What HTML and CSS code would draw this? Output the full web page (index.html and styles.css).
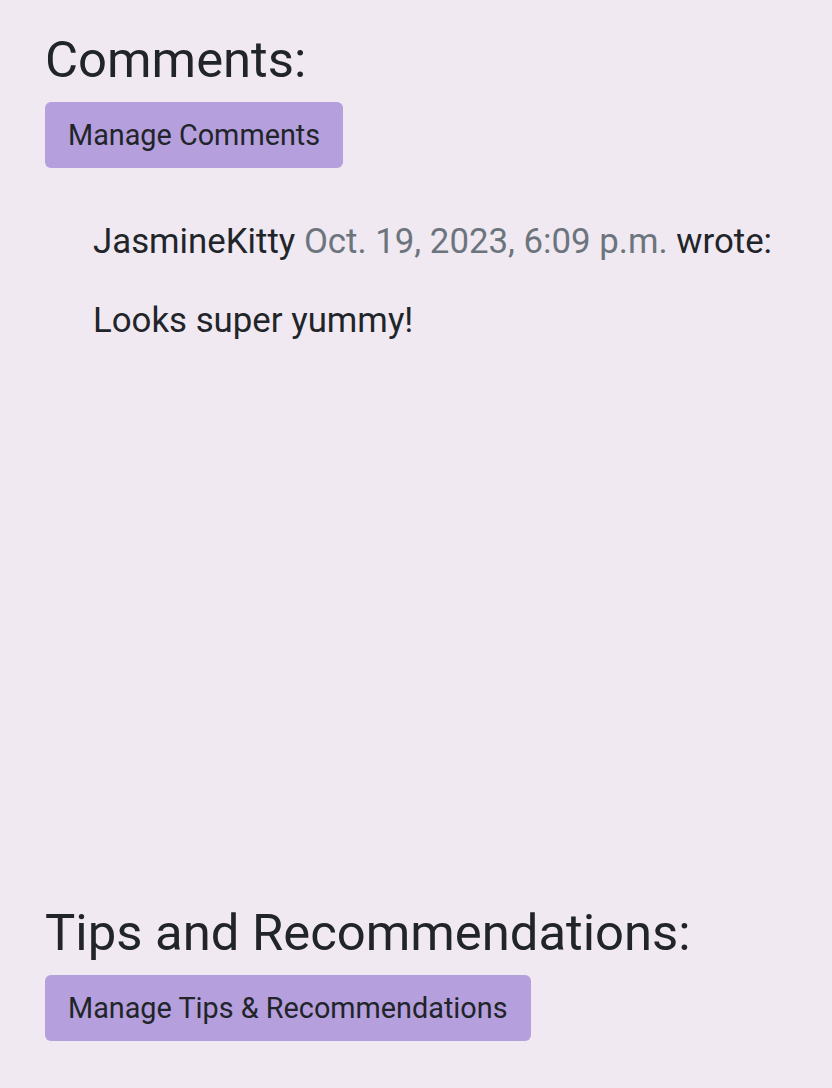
FILE: index.html
```html
<!DOCTYPE html>
<html>
<head>
<meta charset="utf-8">
<link rel="stylesheet" href="styles.css">
</head>
<body>
<main class="page">
  <section class="section comments">
    <h2 class="title">Comments:</h2>
    <a class="btn" href="#">Manage Comments</a>
    <ul class="comment-list">
      <li class="comment">
        <p class="meta">JasmineKitty <span class="muted">Oct. 19, 2023, 6:09 p.m.</span> wrote:</p>
        <p class="body">Looks super yummy!</p>
      </li>
    </ul>
  </section>
  <section class="section tips">
    <h2 class="title">Tips and Recommendations:</h2>
    <a class="btn" href="#">Manage Tips &amp; Recommendations</a>
  </section>
</main>
</body>
</html>
```

FILE: styles.css
```css
html, body {
  margin: 0;
  padding: 0;
  background: #f0e9f1;
}
body {
  font-family: Roboto, "Noto Sans", sans-serif;
  color: #212529;
  font-size: 34.8px;
  line-height: 51px;
}
.page {
  padding: 29px 45px 0 45px;
}
.section {
  display: flex;
  flex-direction: column;
  align-items: flex-start;
}
.comments {
  min-height: 873px;
}
.title {
  margin: 0 0 12px 0;
  font-weight: 400;
  font-size: 50.8px;
  line-height: 61px;
}
.btn {
  display: inline-block;
  background: #b59fdc;
  color: #212529;
  text-decoration: none;
  border-radius: 6px;
  padding: 0 23px;
  height: 66px;
  line-height: 66px;
  font-size: 28.8px;
}
.comment-list {
  list-style: none;
  margin: 48px 0 0 0;
  padding: 0 0 0 48px;
}
.comment p {
  margin: 0 0 28px 0;
}
.muted {
  color: #6c757d;
}
```
